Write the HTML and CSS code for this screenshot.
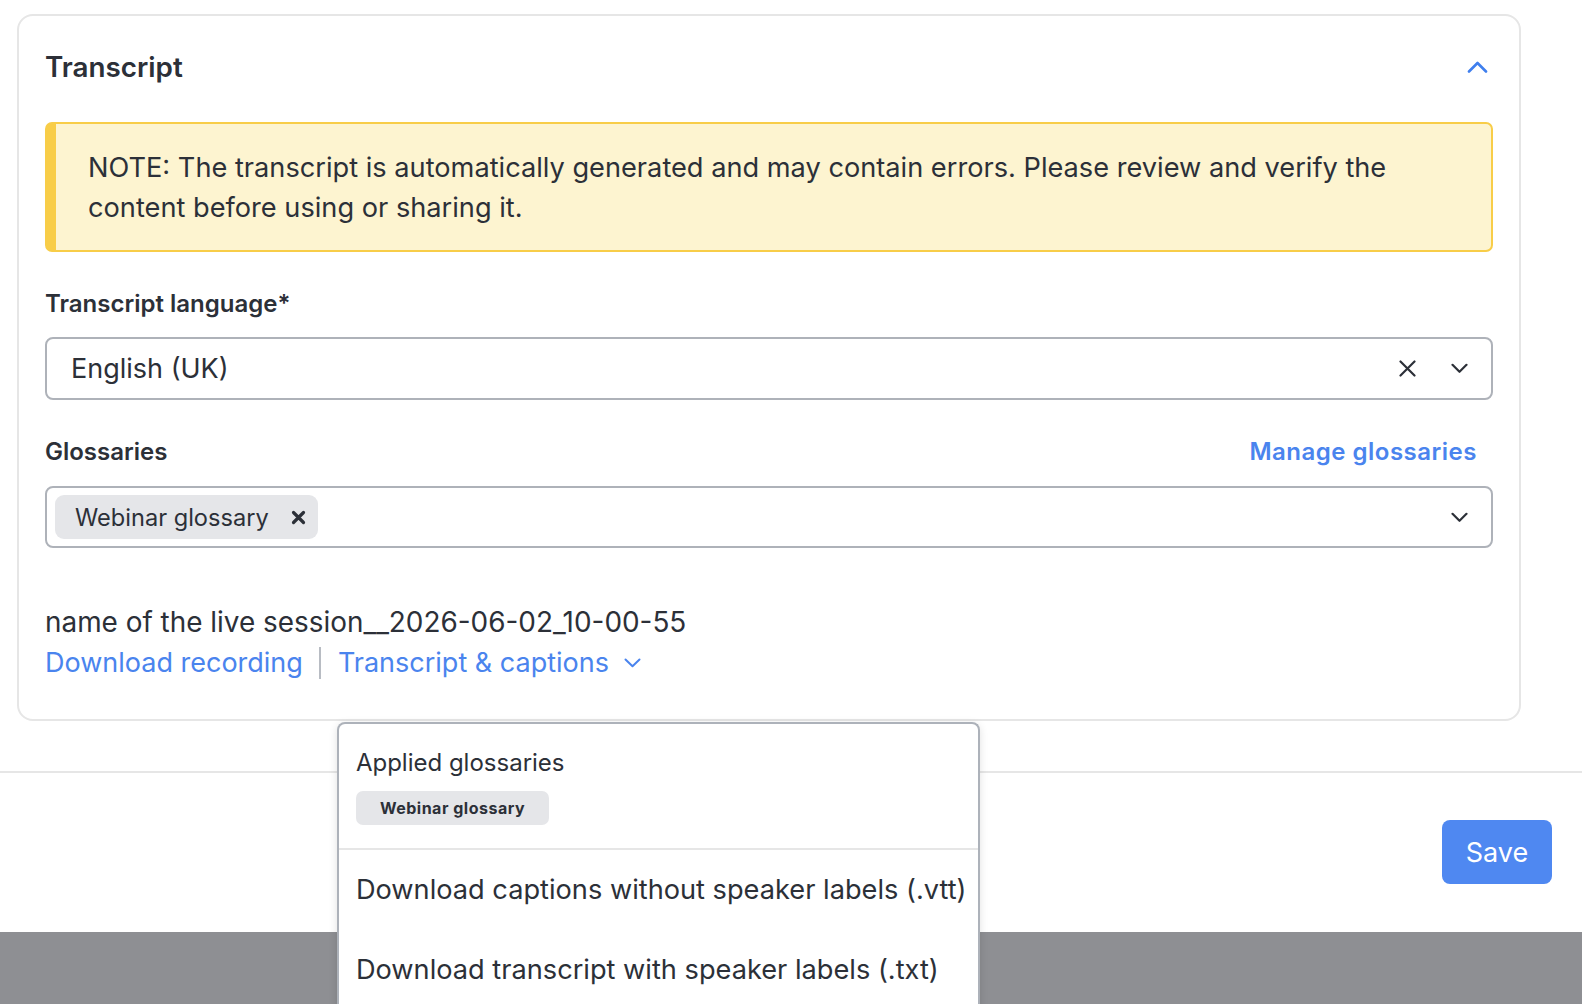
FILE: index.html
```html
<!DOCTYPE html>
<html lang="en">
<head>
    <meta charset="UTF-8">
    <meta name="viewport" content="width=device-width, initial-scale=1.0">
    <title>Transcript</title>
    <link rel="stylesheet" href="styles.css">
</head>
<body>
    <div class="modal">
        <section class="card">
            <div class="card-header">
                <h2>Transcript</h2>
                <button class="collapse" type="button" aria-label="Collapse">
                    <svg width="21" height="12" viewBox="0 0 21 12"><path d="M2 10.5 10.5 2 19 10.5" fill="none" stroke="#3f7fee" stroke-width="2.6" stroke-linecap="round" stroke-linejoin="round"/></svg>
                </button>
            </div>

            <div class="note">
                NOTE: The transcript is automatically generated and may contain errors. Please review and verify the content before using or sharing it.
            </div>

            <div class="field">
                <label class="field-label">Transcript language*</label>
                <div class="select">
                    <span class="select-value">English (UK)</span>
                    <span class="select-icons">
                        <svg width="17" height="17" viewBox="0 0 17 17"><path d="M1.5 1.5 15.5 15.5M15.5 1.5 1.5 15.5" stroke="#2c3038" stroke-width="2.2" stroke-linecap="round"/></svg>
                        <svg width="17" height="11" viewBox="0 0 17 11"><path d="M1.5 1.8 8.5 8.8 15.5 1.8" fill="none" stroke="#2c3038" stroke-width="2.2" stroke-linecap="round" stroke-linejoin="round"/></svg>
                    </span>
                </div>
            </div>

            <div class="field">
                <div class="field-head">
                    <label class="field-label">Glossaries</label>
                    <a class="manage" href="#">Manage glossaries</a>
                </div>
                <div class="select multi">
                    <span class="chip">
                        Webinar glossary
                        <svg width="15" height="15" viewBox="0 0 15 15"><path d="M2.5 2.5 12.5 12.5M12.5 2.5 2.5 12.5" stroke="#2c3038" stroke-width="3.2" stroke-linecap="round"/></svg>
                    </span>
                    <span class="select-icons">
                        <svg width="17" height="11" viewBox="0 0 17 11"><path d="M1.5 1.8 8.5 8.8 15.5 1.8" fill="none" stroke="#2c3038" stroke-width="2.2" stroke-linecap="round" stroke-linejoin="round"/></svg>
                    </span>
                </div>
            </div>

            <div class="recording">
                <div class="session-name">name of the live session__2026-06-02_10-00-55</div>
                <div class="links">
                    <a href="#">Download recording</a>
                    <span class="sep"></span>
                    <span class="menu-wrap">
                        <a href="#">Transcript &amp; captions
                            <svg width="17" height="10" viewBox="0 0 17 10"><path d="M1.5 1.5 8.5 8.3 15.5 1.5" fill="none" stroke="#4a84ee" stroke-width="2" stroke-linecap="round" stroke-linejoin="round"/></svg>
                        </a>
                        <div class="menu">
                            <div class="menu-top">
                                <div class="menu-title">Applied glossaries</div>
                                <span class="tag">Webinar glossary</span>
                            </div>
                            <a class="menu-item" href="#">Download captions without speaker labels (.vtt)</a>
                            <a class="menu-item" href="#">Download transcript with speaker labels (.txt)</a>
                        </div>
                    </span>
                </div>
            </div>
        </section>

        <div class="footer">
            <button class="save" type="button">Save</button>
        </div>
    </div>
</body>
</html>
```

FILE: styles.css
```css
html, body {
    height: 100%;
    overflow: hidden;
}
body {
    margin: 0;
    font-family: Inter, "Noto Sans", sans-serif;
    color: #2c3038;
    background-color: #8e8f93;
}
a {
    color: #4a84ee;
    text-decoration: none;
}
.modal {
    height: 932px;
    background-color: #fff;
    padding-top: 14px;
    box-sizing: border-box;
}
.card {
    width: 1504px;
    margin-left: 17px;
    box-sizing: border-box;
    border: 2px solid #e6e6e6;
    border-radius: 16px;
    padding: 34px 26px 38px 26px;
}
.card-header {
    display: flex;
    justify-content: space-between;
    align-items: center;
    height: 34px;
}
.card-header h2 {
    margin: 0;
    font-size: 27.8px;
    line-height: 34px;
    font-weight: 600;
}
.collapse {
    border: none;
    background: none;
    padding: 0 5px 0 0;
    cursor: pointer;
    display: flex;
}
.note {
    margin-top: 38px;
    background-color: #fdf4d0;
    border: 2px solid #f8cd48;
    border-left-width: 11px;
    border-radius: 7px;
    padding: 24px 60px 22px 32px;
    font-size: 27.2px;
    line-height: 40px;
}
.field {
    margin-top: 37px;
}
.field-label {
    display: block;
    font-size: 24px;
    line-height: 30px;
    font-weight: 600;
    margin-bottom: 18px;
}
.field-head {
    display: flex;
    justify-content: space-between;
    align-items: flex-start;
    padding-right: 16px;
}
.field-head .field-label {
    margin-bottom: 19px;
}
.manage {
    font-size: 24px;
    line-height: 30px;
    font-weight: 600;
    letter-spacing: 0.5px;
}
.select {
    height: 63px;
    box-sizing: border-box;
    border: 2px solid #aeb2b9;
    border-radius: 8px;
    display: flex;
    align-items: center;
    justify-content: space-between;
    padding: 0 23px 0 24px;
    font-size: 27px;
}
.select.multi {
    height: 62px;
    padding-left: 8px;
}
.select-icons {
    display: flex;
    align-items: center;
    gap: 35px;
}
.chip {
    display: inline-flex;
    align-items: center;
    gap: 22px;
    height: 44px;
    padding: 0 12px 0 20px;
    background-color: #e5e6e9;
    border-radius: 9px;
    font-size: 23.6px;
}
.recording {
    margin-top: 57px;
}
.session-name {
    font-size: 27.9px;
    line-height: 34px;
}
.links {
    display: flex;
    align-items: center;
    font-size: 27px;
    line-height: 36px;
    margin-top: 6px;
}
.links a {
    display: inline-flex;
    align-items: center;
    gap: 15px;
}
.sep {
    width: 2px;
    height: 32px;
    background-color: #b8bcc3;
    margin: 0 17px 0 16px;
}
.menu-wrap {
    position: relative;
}
.menu {
    position: absolute;
    left: -1px;
    top: 77px;
    width: 643px;
    box-sizing: border-box;
    background-color: #fff;
    border: 2px solid #adb2ba;
    border-bottom: none;
    border-radius: 8px 8px 0 0;
    box-shadow: 0 2px 8px rgba(0, 0, 0, 0.12);
}
.menu-top {
    padding: 24px 17px 23px 17px;
    border-bottom: 2px solid #e6e6e6;
}
.menu-title {
    font-size: 24px;
    line-height: 30px;
    color: #2c3038;
}
.tag {
    display: inline-block;
    margin-top: 13px;
    height: 34px;
    line-height: 34px;
    padding: 0 24px;
    border-radius: 7px;
    background-color: #e5e6e9;
    font-size: 16px;
    font-weight: 700;
    letter-spacing: 0.5px;
}
.links .menu-item {
    display: block;
    color: #2c3038;
    font-size: 27.2px;
    line-height: 80px;
    padding: 0 17px;
    white-space: nowrap;
}
.footer {
    margin-top: 50px;
    border-top: 2px solid #e6e6e6;
    display: flex;
    justify-content: flex-end;
    padding: 47px 30px 0 0;
}
.save {
    width: 110px;
    height: 64px;
    border: none;
    border-radius: 8px;
    background-color: #4f88f1;
    color: #fff;
    font-family: Inter, "Noto Sans", sans-serif;
    font-size: 27px;
    cursor: pointer;
}
```
